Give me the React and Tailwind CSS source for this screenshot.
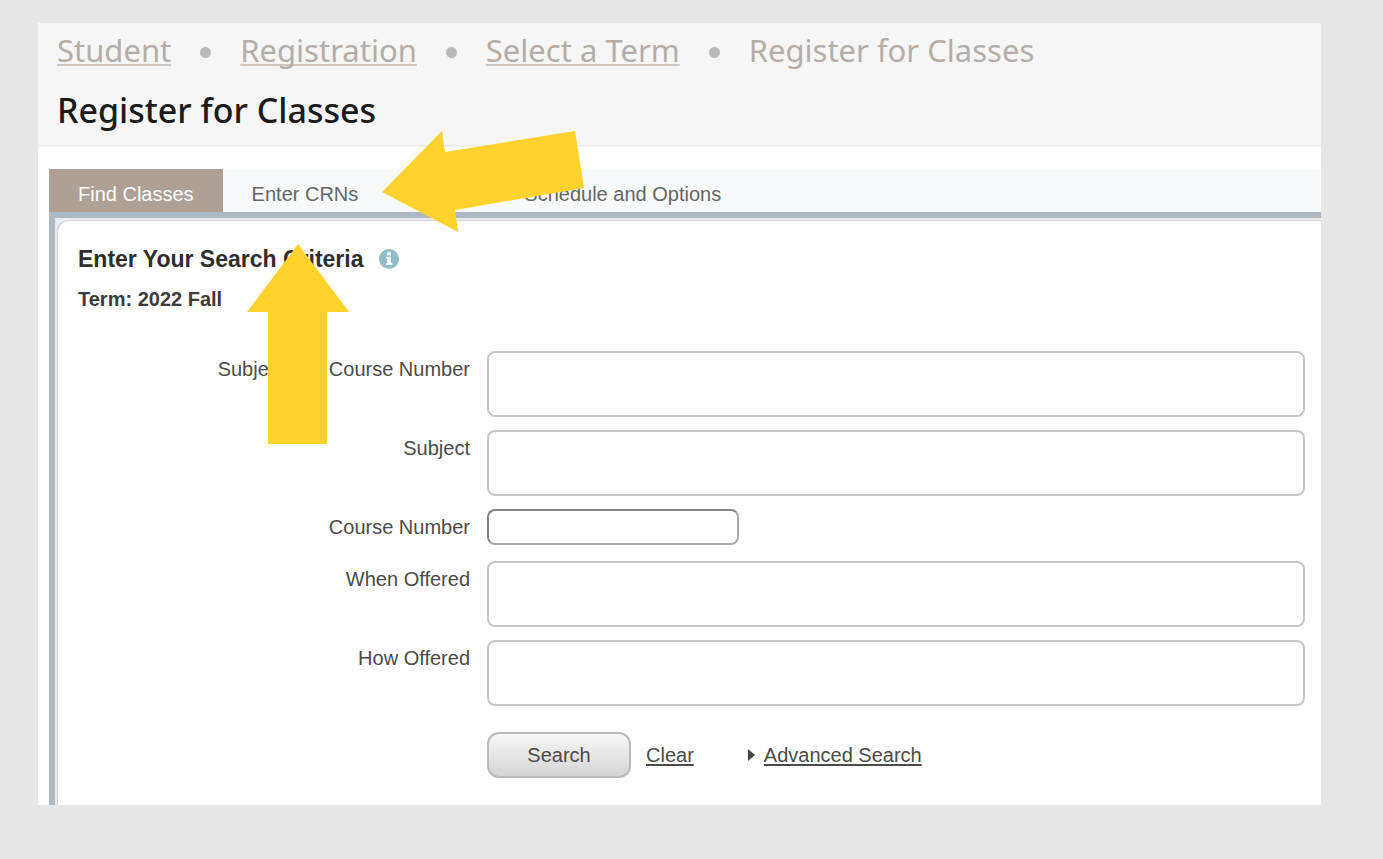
import { useState } from "react";

const crumbs = ["Student", "Registration", "Select a Term"];

const tabs = ["Find Classes", "Enter CRNs", "Plans", "Schedule and Options"];

const fields = [
  { id: "subjectCourse", label: "Subject and Course Number" },
  { id: "subject", label: "Subject" },
  { id: "courseNumber", label: "Course Number", small: true },
  { id: "whenOffered", label: "When Offered" },
  { id: "howOffered", label: "How Offered" },
];

const emptyForm = { subjectCourse: "", subject: "", courseNumber: "", whenOffered: "", howOffered: "" };

const InfoIcon = () => (
  <svg viewBox="0 0 20 20" className="w-5 h-5">
    <circle cx="10" cy="10" r="10" fill="#8fbcc6" />
    <rect x="8.2" y="3.2" width="3.8" height="3.2" fill="#fff" />
    <path d="M7 7.8h5v6.4h1.4V16H6.8v-1.8h1.4V9.6H7z" fill="#fff" />
  </svg>
);

const App = () => {
  const [activeTab, setActiveTab] = useState("Find Classes");
  const [form, setForm] = useState(emptyForm);

  const handleChange = (e) => setForm({ ...form, [e.target.id]: e.target.value });

  return (
    <div className="min-h-screen bg-[#e7e7e7] pl-[38px] pr-[62px] pt-[23px] pb-[54px] font-['Liberation_Sans',Arial,sans-serif] text-xl leading-6 text-[#4b4b4b]">
      <div className="relative bg-white overflow-hidden">
        <header className="bg-[#f6f6f6] border-b-2 border-[#efefef] pl-[19px] pt-[5px] pb-3 font-['Noto_Sans',sans-serif]">
          <nav aria-label="Breadcrumb" className="flex items-center text-[31px] leading-[44px] text-[#b5ada7]">
            {crumbs.map((crumb) => (
              <div key={crumb} className="flex items-center">
                <a href="#" className="underline decoration-2 underline-offset-2 [text-decoration-skip-ink:none] decoration-[#cfc6c0]">{crumb}</a>
                <span className="w-[11px] h-[11px] mx-[29px] mt-1 rounded-full bg-[#b9b9b9]" />
              </div>
            ))}
            <span>Register for Classes</span>
          </nav>
          <h1 className="mt-[15px] text-[34px] leading-[46px] font-medium text-[#1b1b1b]">Register for Classes</h1>
        </header>

        <main className="mt-[22px] ml-[11px]">
          <div role="tablist" className="flex bg-[#f9fafc]">
            {tabs.map((tab) => (
              <button
                key={tab}
                type="button"
                role="tab"
                aria-selected={activeTab === tab}
                onClick={() => setActiveTab(tab)}
                className={`px-[29px] pt-[13px] pb-1.5 ${activeTab === tab ? "bg-[#ada095] text-white" : "text-[#666]"}`}
              >
                {tab}
              </button>
            ))}
          </div>

          <div className="border-t-[6px] border-l-[6px] border-[#abb9c4] bg-[#e6ecf1]">
            <div className="pt-0.5 pl-0.5">
              <form onSubmit={(e) => e.preventDefault()} className="bg-white border-t border-l border-[#d5cfd2] rounded-tl-xl pl-5 pr-4 pt-6 pb-[27px]">
                <div className="flex items-center gap-4 text-[#2e2e2e]">
                  <h2 className="text-[23px] leading-7 font-bold">Enter Your Search Criteria</h2>
                  <button type="button" aria-label="Help"><InfoIcon /></button>
                </div>
                <p className="mt-3.5 font-bold text-[#3c3c3c]">Term: 2022 Fall</p>

                <div className="mt-10 flex flex-col gap-[13px]">
                  {fields.map(({ id, label, small }) => (
                    <div key={id} className={`flex items-start gap-[17px] ${small ? "h-[39px]" : ""}`}>
                      <label htmlFor={id} className="w-[392px] shrink-0 pt-1.5 text-right">{label}</label>
                      <input
                        id={id}
                        type="text"
                        value={form[id]}
                        onChange={handleChange}
                        className={`border-2 rounded-lg px-2 bg-white ${small ? "w-[252px] h-9 border-[#a9a9a9] border-t-[#858585] border-l-[#858585]" : "flex-1 min-w-0 h-[66px] border-[#c6c6c6]"}`}
                      />
                    </div>
                  ))}
                </div>

                <div className="mt-[26px] ml-[409px] flex items-center">
                  <button type="submit" className="w-36 h-[46px] rounded-xl border-2 border-[#b9b9b9] bg-linear-to-b from-[#f7f7f7] to-[#d5d5d5]">Search</button>
                  <button type="button" onClick={() => setForm(emptyForm)} className="ml-[15px] underline decoration-2 underline-offset-2">Clear</button>
                  <svg viewBox="0 0 7 12" className="w-[7px] h-3 ml-[54px] mr-[9px]">
                    <path d="M0 0L7 6L0 12Z" fill="#444" />
                  </svg>
                  <a href="#" className="underline decoration-2 underline-offset-2">Advanced Search</a>
                </div>
              </form>
            </div>
          </div>
        </main>

        {/* callout arrows pointing at the Enter CRNs tab */}
        <svg viewBox="0 0 202 101" className="absolute left-[344px] top-[108px] w-[202px] h-[101px] pointer-events-none">
          <path d="M0 61L60 0L63 21L193 0L202 57L73 79L76 101Z" fill="#ffd22e" />
        </svg>
        <svg viewBox="0 0 102 200" className="absolute left-[209px] top-[221px] w-[102px] h-[200px] pointer-events-none">
          <path d="M51 0L102 68H80V200H21V68H0Z" fill="#ffd22e" />
        </svg>
      </div>
    </div>
  );
};

export default App;
